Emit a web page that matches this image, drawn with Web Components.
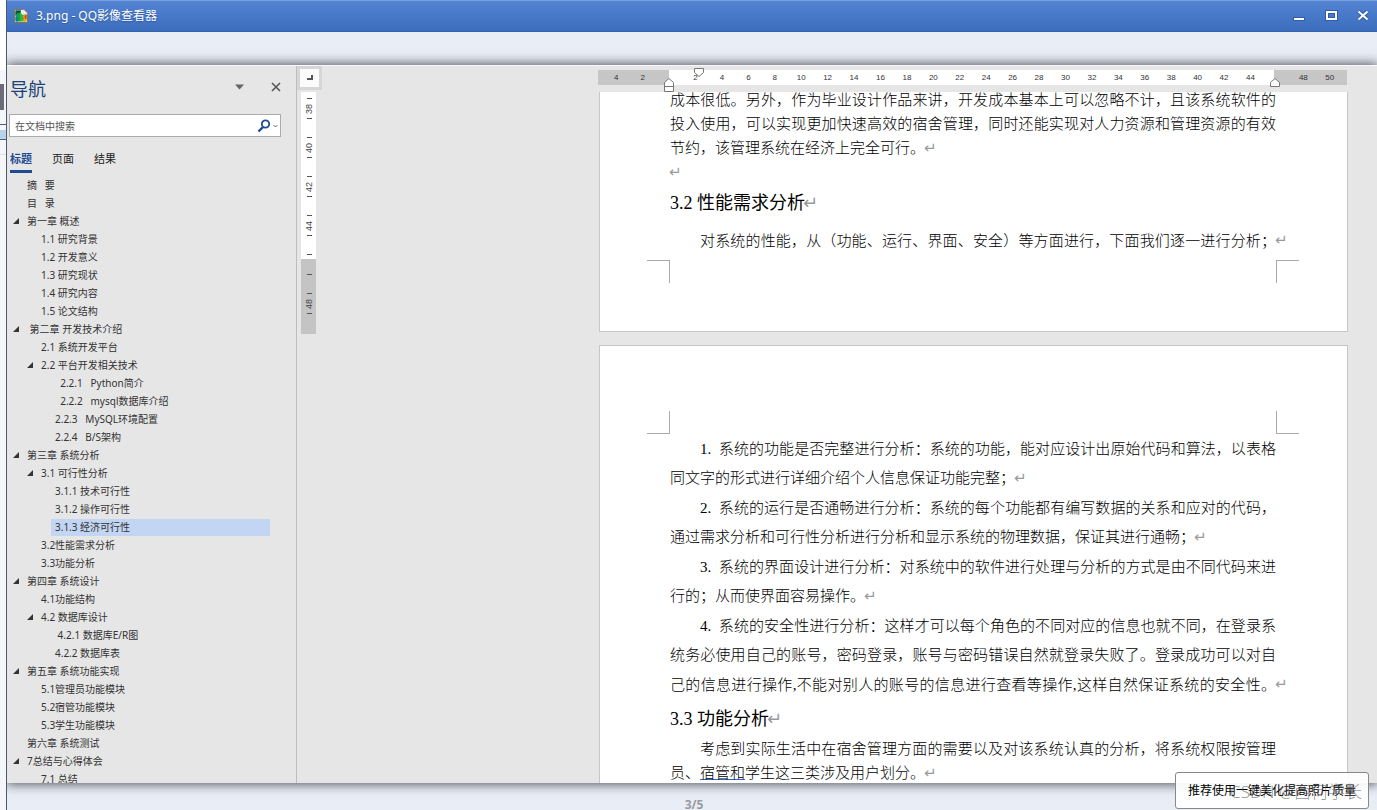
<!DOCTYPE html>
<html lang="zh-CN">
<head>
<meta charset="utf-8">
<title>3.png - QQ影像查看器</title>
<style>
  html, body { margin: 0; height: 100%; overflow: hidden; }
  body { font-family: "Noto Sans", "Noto Sans CJK SC", sans-serif; font-size: 12px; color: #333; background: #f4f6f9; }
  doc-line u { text-decoration-color: #2f62c4; }
</style>
</head>
<body>
<viewer-window>
  <title-bar slot="title">3.png - QQ影像查看器</title-bar>
  <nav-pane slot="picture">
    <nav-item>摘   要</nav-item>
    <nav-item>目   录</nav-item>
    <nav-item open>第一章 概述</nav-item>
    <nav-item level="2">1.1 研究背景</nav-item>
    <nav-item level="2">1.2 开发意义</nav-item>
    <nav-item level="2">1.3 研究现状</nav-item>
    <nav-item level="2">1.4 研究内容</nav-item>
    <nav-item level="2">1.5 论文结构</nav-item>
    <nav-item open> 第二章 开发技术介绍</nav-item>
    <nav-item level="2">2.1 系统开发平台</nav-item>
    <nav-item level="2" open>2.2 平台开发相关技术</nav-item>
    <nav-item level="3">  2.2.1   Python简介</nav-item>
    <nav-item level="3">  2.2.2   mysql数据库介绍</nav-item>
    <nav-item level="3">2.2.3   MySQL环境配置</nav-item>
    <nav-item level="3">2.2.4   B/S架构</nav-item>
    <nav-item open>第三章 系统分析</nav-item>
    <nav-item level="2" open>3.1 可行性分析</nav-item>
    <nav-item level="3">3.1.1 技术可行性</nav-item>
    <nav-item level="3">3.1.2 操作可行性</nav-item>
    <nav-item level="3" selected>3.1.3 经济可行性</nav-item>
    <nav-item level="2">3.2性能需求分析</nav-item>
    <nav-item level="2">3.3功能分析</nav-item>
    <nav-item open>第四章 系统设计</nav-item>
    <nav-item level="2">4.1功能结构</nav-item>
    <nav-item level="2" open>4.2 数据库设计</nav-item>
    <nav-item level="3"> 4.2.1 数据库E/R图</nav-item>
    <nav-item level="3">4.2.2 数据库表</nav-item>
    <nav-item open>第五章 系统功能实现</nav-item>
    <nav-item level="2">5.1管理员功能模块</nav-item>
    <nav-item level="2">5.2宿管功能模块</nav-item>
    <nav-item level="2">5.3学生功能模块</nav-item>
    <nav-item>第六章 系统测试</nav-item>
    <nav-item open>7总结与心得体会</nav-item>
    <nav-item level="2">7.1 总结</nav-item>
  </nav-pane>
  <side-ruler slot="picture"></side-ruler>
  <doc-view slot="picture">
    <doc-page scrolled>
      <doc-line fill>成本很低。另外，作为毕业设计作品来讲，开发成本基本上可以忽略不计，且该系统软件的</doc-line>
      <doc-line fill>投入使用，可以实现更加快速高效的宿舍管理，同时还能实现对人力资源和管理资源的有效</doc-line>
      <doc-line end>节约，该管理系统在经济上完全可行。</doc-line>
      <doc-line end></doc-line>
      <doc-heading spaced>3.2 性能需求分析</doc-heading>
      <doc-line indent fill tall end>对系统的性能，从（功能、运行、界面、安全）等方面进行，下面我们逐一进行分析；</doc-line>
      <crop-marks></crop-marks>
    </doc-page>
    <doc-page>
      <crop-marks top></crop-marks>
      <doc-line loose indent fill>1.&nbsp; 系统的功能是否完整进行分析：系统的功能，能对应设计出原始代码和算法，以表格</doc-line>
      <doc-line loose last end>同文字的形式进行详细介绍个人信息保证功能完整；</doc-line>
      <doc-line loose indent fill>2.&nbsp; 系统的运行是否通畅进行分析：系统的每个功能都有编写数据的关系和应对的代码，</doc-line>
      <doc-line loose last end>通过需求分析和可行性分析进行分析和显示系统的物理数据，保证其进行通畅；</doc-line>
      <doc-line loose indent fill>3.&nbsp; 系统的界面设计进行分析：对系统中的软件进行处理与分析的方式是由不同代码来进</doc-line>
      <doc-line loose last end>行的；从而使界面容易操作。</doc-line>
      <doc-line loose indent fill>4.&nbsp; 系统的安全性进行分析：这样才可以每个角色的不同对应的信息也就不同，在登录系</doc-line>
      <doc-line loose last fill>统务必使用自己的账号，密码登录，账号与密码错误自然就登录失败了。登录成功可以对自</doc-line>
      <doc-line loose last fill end>己的信息进行操作,不能对别人的账号的信息进行查看等操作,这样自然保证系统的安全性。</doc-line>
      <doc-heading spaced>3.3 功能分析</doc-heading>
      <doc-line indent fill>考虑到实际生活中在宿舍管理方面的需要以及对该系统认真的分析，将系统权限按管理</doc-line>
      <doc-line end>员、<u>宿管和</u>学生这三类涉及用户划分。</doc-line>
    </doc-page>
  </doc-view>
  <span slot="count">3/5</span>
  <tip-bubble slot="tip" watermark="CSDN @西何学长">推荐使用一键美化提高照片质量</tip-bubble>
</viewer-window>

<script>
const define = (name, html, setup) => {
  const template = document.createElement('template');
  template.innerHTML = html;
  customElements.define(name, class extends HTMLElement {
    constructor() {
      super();
      this.attachShadow({ mode: 'open' }).append(template.content.cloneNode(true));
    }
    connectedCallback() { if (setup) setup(this, this.shadowRoot); }
  });
};

define('viewer-window', `
  <style>
    :host { display: grid; grid-template-columns: 6px minmax(0, 1fr); height: 100vh; }
    .behind { display: flex; flex-direction: column; overflow: hidden; }
    .behind .blank { flex: 0 0 70px; background: #fff; }
    .behind .glyph { flex: 0 0 26px; width: 4px; margin-top: 14px; background: #6b6b7a; }
    .behind .link { flex: 0 0 1px; margin-top: 14px; background: #4a5f86; }
    .behind .box { flex: 0 0 9px; margin-top: 5px; background: #b9d3ea; border-bottom: 1px solid #4a5f86; }
    .behind .rule { flex: 0 0 1px; margin-top: 14px; background: #dde1e6; }
    .window { display: grid; grid-template-rows: 32px 33px minmax(0, 1fr) 27px; border-left: 1px solid #4d5a6c; background: #e9edf6; overflow: hidden; position: relative; }
    .picture { grid-row: 3; display: flex; min-height: 0; background: #e6e6e6; border-top: 1px solid #fafafa; box-sizing: border-box; box-shadow: 0 0 11px 1px rgba(20, 24, 32, .75); }
    .foot { grid-row: 4; text-align: center; padding: 14px 0 0 4px; line-height: 16px; font-weight: 700; font-size: 12px; color: #999ba1; }
    .tip { position: absolute; right: 8px; bottom: 1px; }
  </style>
  <div class="behind"><i class="blank"></i><i class="glyph"></i><i class="link"></i><i class="box"></i><i class="rule"></i></div>
  <div class="window">
    <slot name="title"></slot>
    <main class="picture"><slot name="picture"></slot></main>
    <footer class="foot"><slot name="count"></slot></footer>
    <div class="tip"><slot name="tip"></slot></div>
  </div>`);

define('title-bar', `
  <style>
    :host { display: flex; align-items: center; box-sizing: border-box; height: 32px; padding-left: 6px; color: #fff; font-size: 12px;
      background: linear-gradient(#5384d3, #3c6dbd); border-top: 1px solid #7ba0de; border-bottom: 1px solid #3563b0; }
    h1 { flex: 1; margin: 0 0 0 7px; font: inherit; line-height: 20px; text-shadow: 0 1px 1px #2f5596; }
    button { width: 33px; height: 30px; padding: 0; border: 0; background: none; display: grid; place-items: center; }
    button:last-child { width: 29px; }
    svg { display: block; }
  </style>
  <svg width="16" height="16" viewBox="0 0 16 16">
    <path d="M1.500 1.500H11L14.500 5V14.500H1.500Z" fill="#fff" stroke="#8a7353"/>
    <path d="M2.500 2.500H8V13.500H2.500Z" fill="#12a34a"/><path d="M2.500 2.500H8L7 5Q4 4 2.500 8Z" fill="#0c4f54"/>
    <path d="M2.500 9Q5 8 5 13.500H2.500Z" fill="#0b7f9f"/><path d="M7 4L10 7L13.500 6V13.500H7Z" fill="#35b83d"/>
    <path d="M10 8L13.500 6V13.500H9L11 11Z" fill="#f0a21c"/><path d="M11.500 8L13.500 6.500V11H12Z" fill="#e23a1c"/>
    <path d="M10 1.500L14.500 6H10Z" fill="#fff" stroke="#b9b9b9" stroke-width=".5"/>
  </svg>
  <h1><slot></slot></h1>
  <button aria-label="最小化"><svg width="14" height="12"><rect x="1.500" y="7.500" width="11" height="3" fill="#fff" stroke="#2f5da8"/></svg></button>
  <button aria-label="最大化"><svg width="14" height="12"><rect x="2" y="2" width="9" height="7" fill="none" stroke="#2f5da8" stroke-width="4"/><rect x="2" y="2" width="9" height="7" fill="none" stroke="#fff" stroke-width="2"/></svg></button>
  <button aria-label="关闭"><svg width="14" height="12"><path d="M2.500 1.500L11.500 9.500M11.500 1.500L2.500 9.500" stroke="#2f5da8" stroke-width="4"/><path d="M2.500 1.500L11.500 9.500M11.500 1.500L2.500 9.500" stroke="#fff" stroke-width="2"/></svg></button>`);

define('nav-pane', `
  <style>
    :host { flex: none; display: flex; flex-direction: column; overflow: hidden; border-right: 1px solid #bdbdbd; box-sizing: border-box; width: 290px; }
    header { flex: none; display: flex; align-items: center; height: 28px; padding: 9px 12px 0 3px; }
    h2 { flex: 1; margin: 0; font-size: 18px; font-weight: 400; line-height: 28px; color: #1b4178; }
    button { border: 0; padding: 0; background: none; font: inherit; color: inherit; display: grid; place-items: center; }
    header button { width: 16px; height: 16px; margin: -5px 0 0 20px; }
    .search { flex: none; display: flex; align-items: center; height: 23px; box-sizing: border-box; margin: 11px 15px 0 2px; border: 1px solid #ababab; background: #fff; }
    input { flex: 1; min-width: 0; border: 0; outline: 0; padding: 0 0 0 5px; background: none; font: inherit; font-size: 10px; color: #444; }
    input::placeholder { color: #555; opacity: 1; }
    .search button { width: 24px; height: 21px; }
    .tabs { flex: none; display: flex; gap: 20px; padding: 11px 0 0 3px; height: 25px; font-size: 11px; color: #222; }
    .tabs button { line-height: 22px; height: 25px; align-items: start; border-bottom: 3px solid transparent; box-sizing: border-box; }
    .tabs .on { font-weight: 700; color: #1f4b92; border-color: #1f4b92; }
    .tree { flex: 1; min-height: 0; overflow: hidden; padding-top: 4px; }
  </style>
  <header><h2>导航</h2>
    <button aria-label="选项"><svg width="10" height="6"><path d="M0 .5H9L4.500 5.500Z" fill="#666"/></svg></button>
    <button aria-label="关闭"><svg width="10" height="10"><path d="M1 1L9 9M9 1L1 9" stroke="#555" stroke-width="1.600"/></svg></button>
  </header>
  <div class="search"><input aria-label="在文档中搜索" placeholder="在文档中搜索">
    <button aria-label="搜索"><svg width="22" height="14"><circle cx="8.500" cy="5" r="3.700" fill="none" stroke="#1f4b92" stroke-width="1.800"/><path d="M6 8L1.500 12.500" stroke="#1f4b92" stroke-width="2.400"/><path d="M16.500 6L18.500 8L20.500 6" fill="none" stroke="#666"/></svg></button>
  </div>
  <div class="tabs"><button class="on">标题</button><button>页面</button><button>结果</button></div>
  <nav class="tree"><slot></slot></nav>`);

define('nav-item', `
  <style>
    :host { display: flex; height: 18px; margin-right: 26px; --pad: 2px; }
    :host([level="2"]) { --pad: 16px; }
    :host([level="3"]) { --pad: 30px; }
    svg { flex: none; width: 18px; height: 18px; margin-left: var(--pad); visibility: hidden; }
    :host([open]) svg { visibility: visible; }
    a { flex: 1; height: 17px; margin-left: -4px; padding-left: 4px; white-space: pre; font-size: 10px; line-height: 17px; color: #333; text-decoration: none; }
    :host([selected]) a { background: #c2d5f2; }
  </style>
  <svg viewBox="0 0 18 18"><path d="M4 11H10V5Z" fill="#333"/></svg><a href="#"><slot></slot></a>`);

define('side-ruler', `
  <style>
    :host { flex: 0 0 25px; font: 9px/11px "Liberation Sans", Arial, sans-serif; color: #444; }
    .corner { display: grid; place-items: center; width: 25px; height: 24px; box-sizing: border-box; border: 3px solid #d6d6d6; background: #fbfbfb; }
    .scale { display: flex; flex-direction: column; width: 15px; height: 242px; box-sizing: border-box; margin: 2px 0 0 4px; padding-top: 6px; background: linear-gradient(#fff 167px, #c4c4c4 167px); }
    .mark { display: grid; grid-template-rows: 1px 19px 1px; height: 39px; justify-items: center; padding-left: 2px; }
    .mark::before, .mark::after { content: ""; width: 5px; background: #555; }
    span { writing-mode: vertical-rl; transform: rotate(180deg); text-align: center; }
  </style>
  <div class="corner"><svg width="8" height="6"><path d="M6 0V5M1 4H7" stroke="#555" stroke-width="2" fill="none"/></svg></div>
  <div class="scale"></div>`, (host, root) => {
  root.querySelector('.scale').innerHTML = ['38', '40', '42', '44', '', '48'].map(n => `<div class="mark"><span>${n}</span></div>`).join('');
});

define('doc-view', `
  <style>
    :host { flex: 1; min-width: 0; display: flex; flex-direction: column; align-items: flex-end; padding-right: 29px; overflow: hidden; }
    .ruler { flex: none; position: relative; display: grid; grid-template-columns: repeat(28, 1fr); width: 749px; height: 15px; box-sizing: border-box; margin: 4px 1px 7px 0; padding: 0 4px 0 5px;
      background: linear-gradient(90deg, #c6c6c6 71px, #fff 71px calc(100% - 73px), #c6c6c6 calc(100% - 73px));
      font: 8px/16px "Liberation Sans", Arial, sans-serif; text-align: center; color: #333; }
    svg { position: absolute; }
    .first { left: 96px; top: -2px; } .left { left: 66px; top: 8px; } .right { right: 66px; top: 8px; }
    .pages { flex: 1; min-height: 0; display: flex; flex-direction: column; gap: 13px; overflow: hidden; }
  </style>
  <div class="ruler">
    <svg class="first" width="11" height="9"><path d="M.5 .5H9.500V4.500L5 8.500L.5 4.500Z" fill="#fff" stroke="#777"/></svg>
    <svg class="left" width="11" height="14"><path d="M.5 13.500V4.500L5 .5L9.500 4.500V13.500ZM.5 8.500H9.500" fill="#fff" stroke="#777"/></svg>
    <svg class="right" width="11" height="9"><path d="M.5 8.500V4.500L5 .5L9.500 4.500V8.500Z" fill="#fff" stroke="#777"/></svg>
  </div>
  <div class="pages"><slot></slot></div>`, (host, root) => {
  const ruler = root.querySelector('.ruler');
  const labels = [4, 2, ''];
  for (let n = 2; n <= 50; n += 2) labels.push(n === 46 ? '' : n);
  for (const n of labels) {
    const cell = document.createElement('span');
    cell.textContent = n;
    ruler.append(cell);
  }
});

define('doc-page', `
  <style>
    :host { flex: none; display: block; box-sizing: border-box; width: 749px; padding: 65px 71px 48px 70px; border: 1px solid #c6c6c6; background: #fff;
      font-family: "Liberation Serif", "Noto Sans CJK SC", serif; color: #000; }
    :host([scrolled]) { margin-top: -4px; padding-top: 0; border-top: 0; }
  </style>
  <slot></slot>`);

define('doc-line', `
  <style>
    :host { display: block; position: relative; height: 24px; font-size: 15px; font-weight: 300; line-height: 24px; white-space: nowrap; }
    :host([fill]) { text-align: justify; text-align-last: justify; }
    :host([indent]) { text-indent: 30px; }
    :host([loose]) { height: 29px; line-height: 30px; }
    :host([last]) { padding-bottom: 1px; }
    :host([tall]) { height: 39px; line-height: 41px; }
    .mark { display: none; margin-left: -1px; font-family: "DejaVu Sans"; font-size: 15px; line-height: 1; font-weight: 400; color: #999; text-indent: 0; }
    :host([end]) .mark { display: inline; }
    :host([fill][end]) .mark { position: absolute; left: 100%; top: 50%; margin-top: -8px; }
  </style>
  <slot></slot><span class="mark">↵</span>`);

define('doc-heading', `
  <style>
    :host { display: block; }
    h3 { margin: 0; height: 36px; font-size: 18px; font-weight: 400; line-height: 36px; color: #000; }
    :host([spaced]) h3 { height: 37px; line-height: 38px; }
    .mark { margin-left: -2px; font-family: "DejaVu Sans"; line-height: 1; color: #999; }
  </style>
  <h3><slot></slot><span class="mark">↵</span></h3>`);

define('crop-marks', `
  <style>
    :host { display: flex; justify-content: space-between; margin: 0 -23px; --line: 1px solid #aaa; }
    i { width: 23px; height: 23px; box-sizing: border-box; border-top: var(--line); }
    i:first-of-type { border-right: var(--line); }
    i:last-of-type { border-left: var(--line); }
    :host([top]) i { border-top: 0; border-bottom: var(--line); }
  </style>
  <i></i><i></i>`);

define('tip-bubble', `
  <style>
    :host { display: block; position: relative; box-sizing: border-box; width: 194px; height: 37px; padding-left: 12px; border: 1px solid #888; border-radius: 3px;
      background: rgba(255, 255, 255, .92); font-size: 12px; line-height: 35px; color: #000; white-space: nowrap; }
    .stamp { position: absolute; right: 6px; top: 1px; font-size: 17px; font-weight: 300; color: rgba(90, 90, 90, .65); }
  </style>
  <slot></slot><span class="stamp"></span>`, (host, root) => {
  root.querySelector('.stamp').textContent = host.getAttribute('watermark');
});
</script>
</body>
</html>
